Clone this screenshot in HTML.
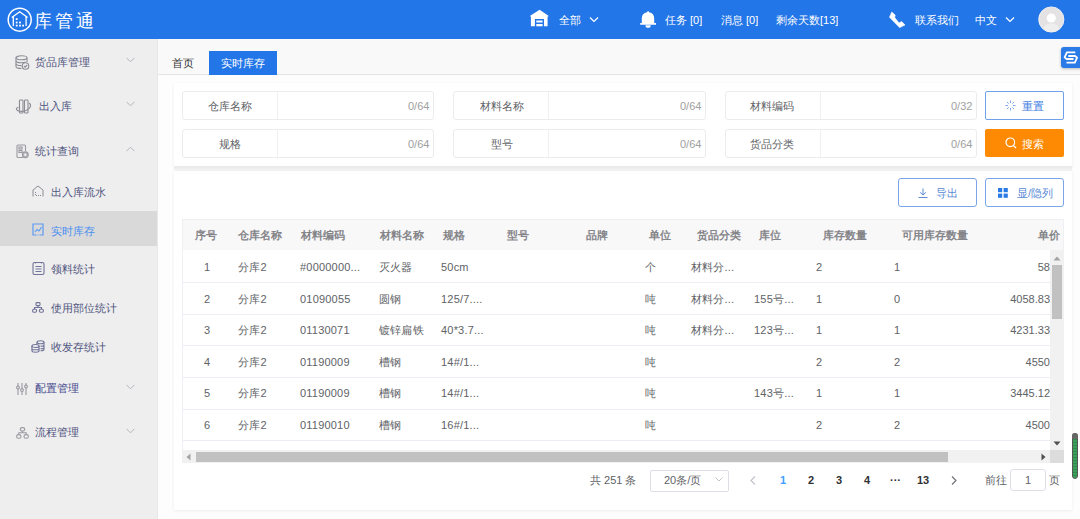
<!DOCTYPE html>
<html><head><meta charset="utf-8">
<style>
*{box-sizing:border-box;margin:0;padding:0}
html,body{width:1080px;height:519px;overflow:hidden;background:#fdfdfd;font-family:"Liberation Sans",sans-serif;font-size:11px;color:#606266}
.a{position:absolute;white-space:nowrap;line-height:11px}
#hdr{position:absolute;left:0;top:0;width:1080px;height:39px;background:#2376e8;color:#fff}
#side{position:absolute;left:0;top:39px;width:158px;height:480px;background:#eeeeee}
.sm{color:#50557f}
.card{position:absolute;background:#fff;box-shadow:0 1px 3px rgba(0,0,0,0.07)}
.inp{position:absolute;height:29px;border:1px solid #ececee;border-radius:3px;background:#fff}
.inp .lb{position:absolute;left:0;top:0;width:95px;height:27px;border-right:1px solid #f0f0f2}
.th{color:#858589;font-weight:bold}
.hl{position:absolute;left:183px;width:868px;height:1px;background:#ebeef5}
</style></head><body>
<!-- header -->
<div id="hdr">
  <svg class="a" style="left:7px;top:7px" width="26" height="26" viewBox="0 0 26 26">
    <circle cx="12.7" cy="12.7" r="11.5" fill="none" stroke="#fff" stroke-width="1.5"/>
    <path d="M4.8 10.6 L12.7 4.8 L20.6 10.6 M6.3 9.6 V18.9 M19.1 9.6 V18.9" fill="none" stroke="#fff" stroke-width="1.3"/>
    <g fill="#fff"><rect x="8.8" y="11.2" width="1.8" height="1.8"/><rect x="8.8" y="14.6" width="1.8" height="1.8"/><rect x="12.1" y="14.6" width="1.8" height="1.8"/><rect x="8.8" y="17.7" width="1.8" height="1.8"/><rect x="12.1" y="17.7" width="1.8" height="1.8"/><rect x="15.2" y="17.7" width="1.8" height="1.8"/></g>
  </svg>
  <div class="a" style="left:34px;top:12px;font-size:18px;line-height:18px;letter-spacing:3px">库管通</div>
  <!-- home icon -->
  <svg class="a" style="left:529px;top:9px" width="20" height="18" viewBox="0 0 20 18">
    <path d="M10.6 0.7 L19.4 6.8 V7.6 H18.6 V17.3 H15 V10 H5.9 V17.3 H1.9 V7.6 H1.2 V6.8 Z" fill="#fff"/>
    <rect x="7.3" y="11.5" width="6.3" height="2" fill="#fff"/><rect x="7.3" y="15" width="6.3" height="2.3" fill="#fff"/>
  </svg>
  <div class="a" style="left:559px;top:15px">全部</div>
  <svg class="a" style="left:589px;top:16px" width="10" height="7" viewBox="0 0 10 7"><path d="M1 1.5 L5 5.5 L9 1.5" fill="none" stroke="#fff" stroke-width="1.2"/></svg>
  <!-- bell -->
  <svg class="a" style="left:640px;top:11px" width="17" height="18" viewBox="0 0 17 18">
    <path d="M8.1 0.2 C8.8 0.2 9 0.8 9.1 1.2 C12.5 1.8 14.2 4 14.2 7.5 V11.9 H16 V13.8 H0.2 V11.9 H1.8 V7.5 C1.8 4 3.6 1.8 7.1 1.2 C7.2 0.8 7.4 0.2 8.1 0.2 Z" fill="#fff"/>
    <path d="M5.5 14.2 A2.6 2.6 0 0 0 10.7 14.2 Z" fill="#fff"/>
  </svg>
  <div class="a" style="left:665px;top:15px">任务 [0]</div>
  <div class="a" style="left:721px;top:15px">消息 [0]</div>
  <div class="a" style="left:776px;top:15px">剩余天数[13]</div>
  <!-- phone -->
  <svg class="a" style="left:888px;top:11px" width="18" height="18" viewBox="0 0 18 18">
    <path d="M3.8 1 L7.2 4.1 L6.7 6.5 L11 11.9 L13.7 10.6 L17 14 L11.6 16.6 L1.5 6.2 Z" fill="#fff" stroke="#fff" stroke-width="0.6" stroke-linejoin="round"/>
  </svg>
  <div class="a" style="left:915px;top:15px">联系我们</div>
  <div class="a" style="left:975px;top:15px">中文</div>
  <svg class="a" style="left:1005px;top:16px" width="10" height="7" viewBox="0 0 10 7"><path d="M1 1.5 L5 5.5 L9 1.5" fill="none" stroke="#fff" stroke-width="1.2"/></svg>
  <!-- avatar -->
  <svg class="a" style="left:1038px;top:6px" width="27" height="27" viewBox="0 0 27 27">
    <circle cx="13.3" cy="13.5" r="12.6" fill="#e4e2e2" stroke="#f4f4f6" stroke-width="0.9"/>
    <circle cx="13.3" cy="12" r="4.6" fill="#fff"/>
    <path d="M5.5 22.5 C7 18.5 10 17.5 13.3 17.5 C16.6 17.5 19.6 18.5 21.1 22.5 C19 24.8 16.3 25.8 13.3 25.8 C10.3 25.8 7.6 24.8 5.5 22.5 Z" fill="#eeeeee"/>
  </svg>
</div>

<!-- sidebar -->
<div id="side"></div>
<div class="a" style="left:0;top:211px;width:158px;height:35px;background:#d9d9d9"></div>
<div class="a sm" style="left:35px;top:57px">货品库管理</div>
<div class="a sm" style="left:39px;top:101px">出入库</div>
<div class="a sm" style="left:35px;top:146px">统计查询</div>
<div class="a sm" style="left:51px;top:187px">出入库流水</div>
<div class="a" style="left:51px;top:226px;color:#4b8ff0">实时库存</div>
<div class="a sm" style="left:51px;top:264px">领料统计</div>
<div class="a sm" style="left:51px;top:303px">使用部位统计</div>
<div class="a sm" style="left:51px;top:342px">收发存统计</div>
<div class="a sm" style="left:35px;top:383px;color:#464b8e">配置管理</div>
<div class="a sm" style="left:35px;top:427px">流程管理</div>
<!-- chevrons -->
<svg class="a" style="left:126px;top:57px" width="9" height="6" viewBox="0 0 9 6"><path d="M0.5 0.8 L4.5 4.8 L8.5 0.8" fill="none" stroke="#b4b4bc" stroke-width="1"/></svg>
<svg class="a" style="left:126px;top:101px" width="9" height="6" viewBox="0 0 9 6"><path d="M0.5 0.8 L4.5 4.8 L8.5 0.8" fill="none" stroke="#b4b4bc" stroke-width="1"/></svg>
<svg class="a" style="left:126px;top:146px" width="9" height="6" viewBox="0 0 9 6"><path d="M0.5 5.2 L4.5 1.2 L8.5 5.2" fill="none" stroke="#b4b4bc" stroke-width="1"/></svg>
<svg class="a" style="left:126px;top:384px" width="9" height="6" viewBox="0 0 9 6"><path d="M0.5 0.8 L4.5 4.8 L8.5 0.8" fill="none" stroke="#b4b4bc" stroke-width="1"/></svg>
<svg class="a" style="left:126px;top:428px" width="9" height="6" viewBox="0 0 9 6"><path d="M0.5 0.8 L4.5 4.8 L8.5 0.8" fill="none" stroke="#b4b4bc" stroke-width="1"/></svg>


<!-- sidebar icons -->
<svg class="a" style="left:15px;top:55px" width="15" height="15" viewBox="0 0 15 15" fill="none" stroke="#8c8c96" stroke-width="1.1">
  <ellipse cx="6.5" cy="2.8" rx="5.5" ry="2"/>
  <path d="M1 2.8 V11.5 C1 12.7 3.5 13.5 6.5 13.5"/>
  <path d="M12 2.8 V7"/>
  <path d="M1 5.7 C1 6.9 3.5 7.7 6.5 7.7 C8 7.7 9.5 7.5 10.5 7"/>
  <path d="M1 8.7 C1 9.9 3.5 10.6 6.5 10.6"/>
  <circle cx="10.5" cy="11" r="3.3" fill="#eeeeee"/>
  <path d="M8.9 11 L10.1 12.2 L12.2 10"/>
</svg>
<svg class="a" style="left:15px;top:99px" width="17" height="15" viewBox="0 0 17 15" fill="none" stroke="#8c8c96" stroke-width="1.1">
  <rect x="4.5" y="1" width="3.5" height="13" rx="0.8"/>
  <rect x="9.5" y="1" width="3.5" height="13" rx="0.8"/>
  <path d="M14 4 C17 6 15.5 9.5 11 11.5 C7 13 2.5 12.5 1.5 10.5 C1 9.5 2 8.5 3.5 8.2"/>
</svg>
<svg class="a" style="left:16px;top:144px" width="13" height="15" viewBox="0 0 13 15" fill="none" stroke="#9a9aa2" stroke-width="1.1">
  <path d="M7 13.5 H2 C1.4 13.5 1 13.1 1 12.5 V2 C1 1.4 1.4 1 2 1 H8.5 C9.1 1 9.5 1.4 9.5 2 V7"/>
  <rect x="3" y="3" width="3" height="2"/>
  <rect x="3" y="6.5" width="3" height="2"/>
  <circle cx="9.3" cy="10.8" r="2.9" fill="#b4b4ba" stroke="#9a9aa2"/>
  <circle cx="9.3" cy="10.8" r="1.2" fill="#eeeeee" stroke="none"/>
</svg>
<svg class="a" style="left:32px;top:185px" width="12" height="12" viewBox="0 0 12 12" fill="none" stroke="#8c8c96" stroke-width="1">
  <path d="M1 11.5 V5 L6 1 L11 5 V11.5"/>
  <path d="M3.5 7 V10.5 H9" stroke-dasharray="1 1"/>
</svg>
<svg class="a" style="left:32px;top:223px" width="12" height="13" viewBox="0 0 12 13" fill="none" stroke="#5c9af2" stroke-width="1.2">
  <path d="M4 12 H1 V1 H11 V12 H8"/>
  <path d="M3 9 L5 6.5 L7 8 L9.5 4"/>
  <path d="M4.5 12 H7.5" stroke-dasharray="1 1"/>
</svg>
<svg class="a" style="left:32px;top:261px" width="13" height="14" viewBox="0 0 13 14" fill="none" stroke="#71749a" stroke-width="1.1">
  <rect x="1" y="1.5" width="11" height="12" rx="1.5"/>
  <path d="M3.5 1 V2.5 M9.5 1 V2.5"/>
  <path d="M3.5 5.5 H9.5 M3.5 8 H9.5 M3.5 10.5 H9.5"/>
</svg>
<svg class="a" style="left:32px;top:302px" width="12" height="11" viewBox="0 0 12 11" fill="none" stroke="#71749a" stroke-width="1.1">
  <rect x="4" y="0.6" width="4" height="3" rx="0.8"/>
  <path d="M6 3.6 V5.5 M2.5 7 V5.5 H9.5 V7"/>
  <rect x="0.6" y="7.2" width="4" height="3" rx="1.2"/>
  <rect x="7.4" y="7.2" width="4" height="3" rx="1.2"/>
</svg>
<svg class="a" style="left:31px;top:340px" width="14" height="13" viewBox="0 0 14 13" fill="none" stroke="#71749a" stroke-width="1.1">
  <ellipse cx="9.5" cy="2.2" rx="3.5" ry="1.5"/>
  <path d="M6 2.2 V4.5 M13 2.2 V9.5 C13 10.3 11.5 10.8 9.5 10.8 M13 5 C13 5.8 11.5 6.3 9.5 6.3 M13 7.5 C13 8.3 11.5 8.8 9.5 8.8"/>
  <ellipse cx="4.5" cy="6" rx="3.6" ry="1.5" fill="#eeeeee"/>
  <path d="M0.9 6 V10.8 C0.9 11.6 2.5 12.2 4.5 12.2 C6.5 12.2 8.1 11.6 8.1 10.8 V6 M0.9 8.4 C0.9 9.2 2.5 9.8 4.5 9.8 C6.5 9.8 8.1 9.2 8.1 8.4"/>
</svg>
<svg class="a" style="left:16px;top:382px" width="12" height="14" viewBox="0 0 12 14" fill="none" stroke="#9a9aa2" stroke-width="1.1">
  <path d="M2 1 V4 M2 7 V13 M6 1 V6.5 M6 9.5 V13 M10 1 V3 M10 6 V13"/>
  <circle cx="2" cy="5.5" r="1.4"/>
  <circle cx="6" cy="8" r="1.4"/>
  <circle cx="10" cy="4.5" r="1.4"/>
</svg>
<svg class="a" style="left:16px;top:427px" width="13" height="12" viewBox="0 0 13 12" fill="none" stroke="#9a9aa2" stroke-width="1.1">
  <rect x="4.3" y="0.6" width="4.4" height="3.4" rx="1.7"/>
  <path d="M6.5 4 V5.8 M2.8 7.5 V5.8 H10.2 V7.5"/>
  <rect x="0.6" y="7.6" width="4.4" height="3.6" rx="1.8"/>
  <rect x="8" y="7.6" width="4.4" height="3.6" rx="1.8"/>
</svg>
<!-- tabs -->
<div class="a" style="left:158px;top:39px;width:922px;height:35px;background:#f9f9f9"></div>
<div class="a" style="left:157px;top:39px;width:1px;height:480px;background:#e8e8e8"></div>
<div class="a" style="left:158px;top:74px;width:922px;height:1px;background:#e4e4e4"></div>
<div class="a" style="left:172px;top:58px;color:#333">首页</div>
<div class="a" style="left:209px;top:51px;width:68px;height:24px;background:#2376e8"></div>
<div class="a" style="left:221px;top:58px;color:#fff">实时库存</div>

<!-- search card -->
<div class="card" style="left:174px;top:83px;width:898px;height:84px"></div>
<div class="inp" style="left:182px;top:91px;width:252px"><div class="lb"></div></div>
<div class="inp" style="left:453px;top:91px;width:253px"><div class="lb"></div></div>
<div class="inp" style="left:725px;top:91px;width:252px"><div class="lb"></div></div>
<div class="inp" style="left:182px;top:129px;width:252px"><div class="lb"></div></div>
<div class="inp" style="left:453px;top:129px;width:253px"><div class="lb"></div></div>
<div class="inp" style="left:725px;top:129px;width:252px"><div class="lb"></div></div>
<div class="a" style="left:208px;top:101px">仓库名称</div>
<div class="a" style="left:219px;top:139px">规格</div>
<div class="a" style="left:480px;top:101px">材料名称</div>
<div class="a" style="left:491px;top:139px">型号</div>
<div class="a" style="left:750px;top:101px">材料编码</div>
<div class="a" style="left:750px;top:139px">货品分类</div>
<div class="a" style="left:408px;top:101px;color:#a0a0a0">0/64</div>
<div class="a" style="left:408px;top:139px;color:#a0a0a0">0/64</div>
<div class="a" style="left:680px;top:101px;color:#a0a0a0">0/64</div>
<div class="a" style="left:680px;top:139px;color:#a0a0a0">0/64</div>
<div class="a" style="left:951px;top:101px;color:#a0a0a0">0/32</div>
<div class="a" style="left:951px;top:139px;color:#a0a0a0">0/64</div>
<div class="a" style="left:985px;top:91px;width:79px;height:29px;border:1px solid #6fa0ea;border-radius:2px;background:#fff"></div>
<div class="a" style="left:1022px;top:101px;color:#3d7de0">重置</div>
<div class="a" style="left:985px;top:129px;width:79px;height:28px;border-radius:2px;background:#fe8902"></div>
<div class="a" style="left:1022px;top:139px;color:#fff">搜索</div>

<!-- table card -->
<div class="a" style="left:174px;top:166px;width:898px;height:5px;background:linear-gradient(#e9e9e9,#f4f4f4)"></div>
<div class="card" style="left:174px;top:171px;width:898px;height:339px"></div>
<div class="a" style="left:898px;top:178px;width:79px;height:29px;border:1px solid #7aa5e8;border-radius:3px"></div>
<div class="a" style="left:985px;top:178px;width:79px;height:29px;border:1px solid #7aa5e8;border-radius:3px"></div>
<div class="a" style="left:936px;top:188px;color:#5b8ad6">导出</div>
<div class="a" style="left:1017px;top:188px;color:#5b8ad6">显/隐列</div>

<!-- table -->
<div class="a" style="left:182px;top:219px;width:882px;height:32px;background:#f8f8f9;border:1px solid #eef0f4;border-bottom:1px solid #ebeef5"></div>
<div class="a th" style="left:195px;top:230px">序号</div>
<div class="a th" style="left:238px;top:230px">仓库名称</div>
<div class="a th" style="left:301px;top:230px">材料编码</div>
<div class="a th" style="left:380px;top:230px">材料名称</div>
<div class="a th" style="left:443px;top:230px">规格</div>
<div class="a th" style="left:507px;top:230px">型号</div>
<div class="a th" style="left:586px;top:230px">品牌</div>
<div class="a th" style="left:649px;top:230px">单位</div>
<div class="a th" style="left:697px;top:230px">货品分类</div>
<div class="a th" style="left:759px;top:230px">库位</div>
<div class="a th" style="left:823px;top:230px">库存数量</div>
<div class="a th" style="left:902px;top:230px">可用库存数量</div>
<div class="a th" style="left:1038px;top:230px">单价</div>

<div id="rows"><div class="a" style="left:182px;top:250px;width:869px;height:200px;overflow:hidden;background:#fff;border-left:1px solid #eef0f4">
<div class="a" style="left:14px;top:12px;width:20px;text-align:center">1</div>
<div class="a" style="left:55px;top:12px;letter-spacing:0.2px">分库2</div>
<div class="a" style="left:117px;top:12px;letter-spacing:0.2px">#0000000...</div>
<div class="a" style="left:196px;top:12px;letter-spacing:0.2px">灭火器</div>
<div class="a" style="left:258px;top:12px;letter-spacing:0.2px">50cm</div>
<div class="a" style="left:462px;top:12px;letter-spacing:0.2px">个</div>
<div class="a" style="left:508px;top:12px;letter-spacing:0.2px">材料分...</div>
<div class="a" style="left:633px;top:12px;letter-spacing:0.2px">2</div>
<div class="a" style="left:711px;top:12px;letter-spacing:0.2px">1</div>
<div class="a" style="right:1px;top:12px;text-align:right">58</div>
<div class="a" style="left:0;top:32px;width:869px;height:1px;background:#ebeef5"></div>
<div class="a" style="left:14px;top:44px;width:20px;text-align:center">2</div>
<div class="a" style="left:55px;top:44px;letter-spacing:0.2px">分库2</div>
<div class="a" style="left:117px;top:44px;letter-spacing:0.2px">01090055</div>
<div class="a" style="left:196px;top:44px;letter-spacing:0.2px">圆钢</div>
<div class="a" style="left:258px;top:44px;letter-spacing:0.2px">125/7....</div>
<div class="a" style="left:462px;top:44px;letter-spacing:0.2px">吨</div>
<div class="a" style="left:508px;top:44px;letter-spacing:0.2px">材料分...</div>
<div class="a" style="left:571px;top:44px;letter-spacing:0.2px">155号...</div>
<div class="a" style="left:633px;top:44px;letter-spacing:0.2px">1</div>
<div class="a" style="left:711px;top:44px;letter-spacing:0.2px">0</div>
<div class="a" style="right:1px;top:44px;text-align:right">4058.83</div>
<div class="a" style="left:0;top:64px;width:869px;height:1px;background:#ebeef5"></div>
<div class="a" style="left:14px;top:75px;width:20px;text-align:center">3</div>
<div class="a" style="left:55px;top:75px;letter-spacing:0.2px">分库2</div>
<div class="a" style="left:117px;top:75px;letter-spacing:0.2px">01130071</div>
<div class="a" style="left:196px;top:75px;letter-spacing:0.2px">镀锌扁铁</div>
<div class="a" style="left:258px;top:75px;letter-spacing:0.2px">40*3.7...</div>
<div class="a" style="left:462px;top:75px;letter-spacing:0.2px">吨</div>
<div class="a" style="left:508px;top:75px;letter-spacing:0.2px">材料分...</div>
<div class="a" style="left:571px;top:75px;letter-spacing:0.2px">123号...</div>
<div class="a" style="left:633px;top:75px;letter-spacing:0.2px">1</div>
<div class="a" style="left:711px;top:75px;letter-spacing:0.2px">1</div>
<div class="a" style="right:1px;top:75px;text-align:right">4231.33</div>
<div class="a" style="left:0;top:95px;width:869px;height:1px;background:#ebeef5"></div>
<div class="a" style="left:14px;top:107px;width:20px;text-align:center">4</div>
<div class="a" style="left:55px;top:107px;letter-spacing:0.2px">分库2</div>
<div class="a" style="left:117px;top:107px;letter-spacing:0.2px">01190009</div>
<div class="a" style="left:196px;top:107px;letter-spacing:0.2px">槽钢</div>
<div class="a" style="left:258px;top:107px;letter-spacing:0.2px">14#/1...</div>
<div class="a" style="left:462px;top:107px;letter-spacing:0.2px">吨</div>
<div class="a" style="left:633px;top:107px;letter-spacing:0.2px">2</div>
<div class="a" style="left:711px;top:107px;letter-spacing:0.2px">2</div>
<div class="a" style="right:1px;top:107px;text-align:right">4550</div>
<div class="a" style="left:0;top:127px;width:869px;height:1px;background:#ebeef5"></div>
<div class="a" style="left:14px;top:138px;width:20px;text-align:center">5</div>
<div class="a" style="left:55px;top:138px;letter-spacing:0.2px">分库2</div>
<div class="a" style="left:117px;top:138px;letter-spacing:0.2px">01190009</div>
<div class="a" style="left:196px;top:138px;letter-spacing:0.2px">槽钢</div>
<div class="a" style="left:258px;top:138px;letter-spacing:0.2px">14#/1...</div>
<div class="a" style="left:462px;top:138px;letter-spacing:0.2px">吨</div>
<div class="a" style="left:571px;top:138px;letter-spacing:0.2px">143号...</div>
<div class="a" style="left:633px;top:138px;letter-spacing:0.2px">1</div>
<div class="a" style="left:711px;top:138px;letter-spacing:0.2px">1</div>
<div class="a" style="right:1px;top:138px;text-align:right">3445.12</div>
<div class="a" style="left:0;top:159px;width:869px;height:1px;background:#ebeef5"></div>
<div class="a" style="left:14px;top:170px;width:20px;text-align:center">6</div>
<div class="a" style="left:55px;top:170px;letter-spacing:0.2px">分库2</div>
<div class="a" style="left:117px;top:170px;letter-spacing:0.2px">01190010</div>
<div class="a" style="left:196px;top:170px;letter-spacing:0.2px">槽钢</div>
<div class="a" style="left:258px;top:170px;letter-spacing:0.2px">16#/1...</div>
<div class="a" style="left:462px;top:170px;letter-spacing:0.2px">吨</div>
<div class="a" style="left:633px;top:170px;letter-spacing:0.2px">2</div>
<div class="a" style="left:711px;top:170px;letter-spacing:0.2px">2</div>
<div class="a" style="right:1px;top:170px;text-align:right">4500</div>
<div class="a" style="left:0;top:190px;width:869px;height:1px;background:#ebeef5"></div>
<div class="a" style="left:14px;top:201px;width:20px;text-align:center">7</div>
<div class="a" style="left:55px;top:201px;letter-spacing:0.2px">分库2</div>
<div class="a" style="left:117px;top:201px;letter-spacing:0.2px">01190010</div>
<div class="a" style="left:196px;top:201px;letter-spacing:0.2px">槽钢</div>
<div class="a" style="left:258px;top:201px;letter-spacing:0.2px">16#/1...</div>
<div class="a" style="left:462px;top:201px;letter-spacing:0.2px">吨</div>
<div class="a" style="left:633px;top:201px;letter-spacing:0.2px">2</div>
<div class="a" style="left:711px;top:201px;letter-spacing:0.2px">2</div>
<div class="a" style="right:1px;top:201px;text-align:right">4500</div>
<div class="a" style="left:0;top:222px;width:869px;height:1px;background:#ebeef5"></div>
</div></div><!--/rows-->

<!-- v scrollbar -->
<div class="a" style="left:1050px;top:250px;width:14px;height:201px;background:#f1f1f1"></div>
<div class="a" style="left:1052px;top:265px;width:10px;height:54px;background:#c1c1c1"></div>
<svg class="a" style="left:1053px;top:256px" width="8" height="5" viewBox="0 0 8 5"><path d="M0.5 4.5 L4 0.5 L7.5 4.5 Z" fill="#a3a3a3"/></svg>
<svg class="a" style="left:1053px;top:441px" width="8" height="5" viewBox="0 0 8 5"><path d="M0.5 0.5 L4 4.5 L7.5 0.5 Z" fill="#505050"/></svg>
<!-- h scrollbar -->
<div class="a" style="left:182px;top:450px;width:868px;height:13px;background:#f1f1f1"></div>
<div class="a" style="left:196px;top:452px;width:752px;height:10px;background:#c1c1c1"></div>
<svg class="a" style="left:186px;top:453px" width="5" height="8" viewBox="0 0 5 8"><path d="M4.5 0.5 L0.5 4 L4.5 7.5 Z" fill="#a3a3a3"/></svg>
<svg class="a" style="left:1041px;top:453px" width="5" height="8" viewBox="0 0 5 8"><path d="M0.5 0.5 L4.5 4 L0.5 7.5 Z" fill="#505050"/></svg>
<div class="a" style="left:1050px;top:450px;width:14px;height:13px;background:#dcdcdc"></div>

<!-- pagination -->
<div class="a" style="left:590px;top:475px;color:#606266">共 251 条</div>
<div class="a" style="left:650px;top:470px;width:79px;height:22px;border:1px solid #dcdfe6;border-radius:2px"></div>
<div class="a" style="left:664px;top:475px;color:#606266">20条/页</div>
<svg class="a" style="left:715px;top:477px" width="8" height="5" viewBox="0 0 8 5"><path d="M0.5 0.5 L4 4 L7.5 0.5" fill="none" stroke="#c0c4cc" stroke-width="1"/></svg>
<svg class="a" style="left:750px;top:476px" width="6" height="9" viewBox="0 0 6 9"><path d="M5 0.5 L1 4.5 L5 8.5" fill="none" stroke="#c0c4cc" stroke-width="1.2"/></svg>
<div class="a" style="left:780px;top:475px;color:#409eff;font-weight:bold">1</div>
<div class="a" style="left:808px;top:475px;color:#303133;font-weight:bold">2</div>
<div class="a" style="left:836px;top:475px;color:#303133;font-weight:bold">3</div>
<div class="a" style="left:864px;top:475px;color:#303133;font-weight:bold">4</div>
<div class="a" style="left:890px;top:475px;color:#303133;font-weight:bold">···</div>
<div class="a" style="left:917px;top:475px;color:#303133;font-weight:bold">13</div>
<svg class="a" style="left:951px;top:476px" width="6" height="9" viewBox="0 0 6 9"><path d="M1 0.5 L5 4.5 L1 8.5" fill="none" stroke="#6a6d73" stroke-width="1.1"/></svg>
<div class="a" style="left:985px;top:475px;color:#606266">前往</div>
<div class="a" style="left:1010px;top:469px;width:36px;height:22px;border:1px solid #dcdfe6;border-radius:3px"></div>
<div class="a" style="left:1025px;top:475px;color:#606266">1</div>
<div class="a" style="left:1049px;top:475px;color:#606266">页</div>

<!-- floating widget -->
<div class="a" style="left:1061px;top:47px;width:22px;height:21px;background:#2a7ae8;border-radius:3px;box-shadow:0 1px 3px rgba(0,0,0,0.25)"></div>
<svg class="a" style="left:1063px;top:49px" width="17" height="17" viewBox="0 0 17 17">
  <path d="M12.3 3.3 H3.9 L1.6 8.4 L3.6 10 H10.5" fill="none" stroke="#fff" stroke-width="1.8" stroke-linejoin="round"/>
  <path d="M3.5 13.6 H11.8 L14.1 8.6 L12.1 7 H5.3" fill="none" stroke="#fff" stroke-width="1.8" stroke-linejoin="round"/>
</svg>
<!-- green page scrollbar -->
<div class="a" style="left:1072px;top:433px;width:6px;height:46px;border-radius:3px;background:repeating-linear-gradient(#3c9e5c 0 2px,#2f8a4c 2px 3px);border:1px solid #555"></div>
<div class="a" style="left:1072px;top:433px;width:6px;height:6px;border-radius:3px 3px 0 0;background:#666"></div>
<!-- button icons -->
<svg class="a" style="left:1005px;top:100px" width="11" height="11" viewBox="0 0 11 11" fill="none" stroke="#7aa5e8" stroke-width="1">
  <path d="M5.5 0.5 V3 M5.5 8 V10.5 M0.5 5.5 H3 M8 5.5 H10.5 M2 2 L3.6 3.6 M7.4 7.4 L9 9 M9 2 L7.4 3.6 M3.6 7.4 L2 9"/>
</svg>
<svg class="a" style="left:1005px;top:137px" width="12" height="12" viewBox="0 0 12 12" fill="none" stroke="#fff" stroke-width="1.2">
  <circle cx="5.3" cy="5.3" r="4.3"/><path d="M8.5 8.5 L11 11"/>
</svg>
<svg class="a" style="left:918px;top:188px" width="10" height="10" viewBox="0 0 10 10" fill="none" stroke="#5b8ad6" stroke-width="1">
  <path d="M5 0.5 V7 M2.2 4.3 L5 7 L7.8 4.3 M0.5 9.5 H9.5"/>
</svg>
<svg class="a" style="left:998px;top:188px" width="10" height="10" viewBox="0 0 10 10" fill="#2a7be6">
  <rect x="0" y="0" width="4.2" height="4.2"/><rect x="5.6" y="0" width="4.2" height="4.2"/><rect x="0" y="5.6" width="4.2" height="4.2"/><rect x="5.6" y="5.6" width="4.2" height="4.2"/>
</svg>

</body></html>
